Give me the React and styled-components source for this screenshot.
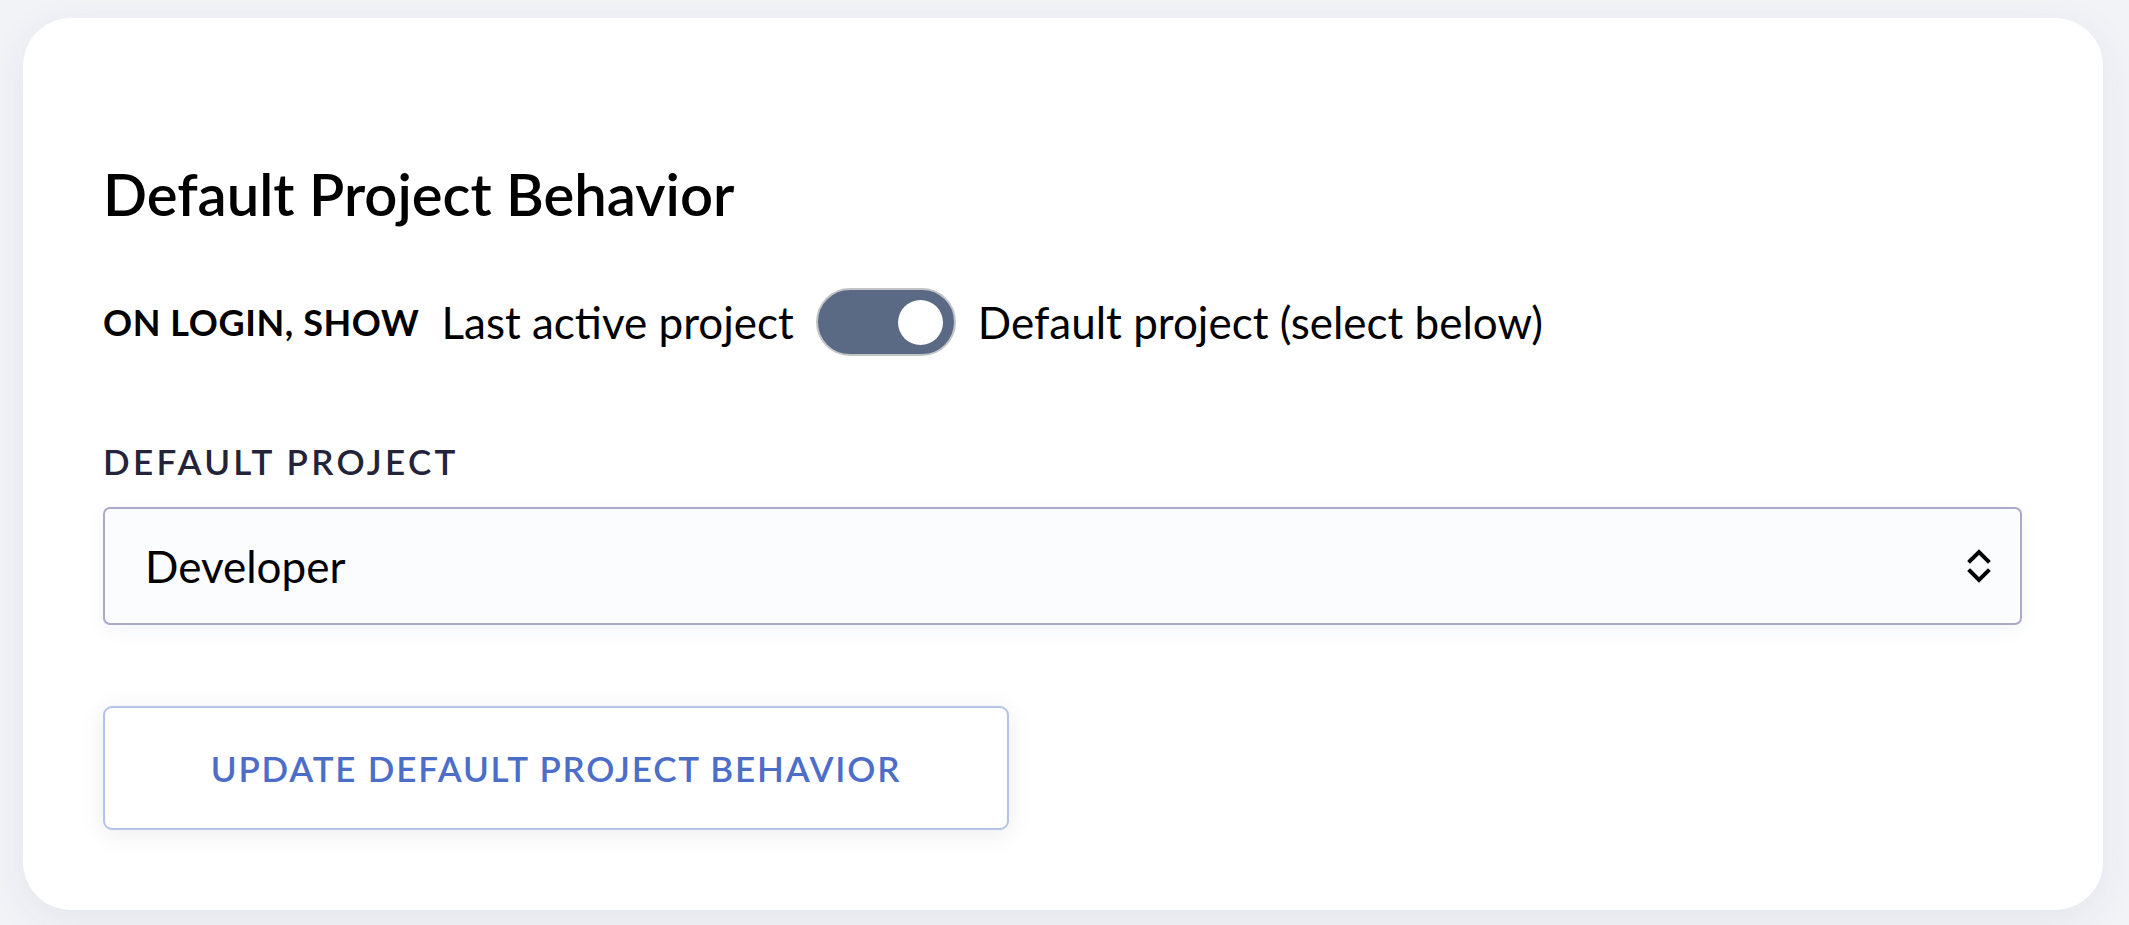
import styled, { createGlobalStyle } from "styled-components";

const GlobalStyle = createGlobalStyle`
    html, body {
        margin: 0;
        padding: 0;
        background: #f2f3f7;
    }
    body {
        font-family: Lato, "Liberation Sans", sans-serif;
        color: #000;
    }
`;

const Page = styled.div`
    box-sizing: border-box;
    width: 100%;
    min-height: 925px;
    padding: 18px 26px 14px 23px;
`;

const Card = styled.section`
    box-sizing: border-box;
    background: #ffffff;
    border-radius: 48px;
    padding: 147px 81px 80px 80px;
    box-shadow: 0 10px 40px rgba(40, 50, 110, 0.07);
    display: flex;
    flex-direction: column;
    align-items: flex-start;
`;

const Title = styled.h2`
    margin: 0;
    font-size: 58px;
    line-height: 1;
    font-weight: 600;
    letter-spacing: 0;
`;

const Row = styled.div`
    margin-top: 65px;
    height: 68px;
    display: flex;
    align-items: center;
    gap: 22px;
`;

const RowLabel = styled.span`
    font-size: 36px;
    font-weight: 700;
    letter-spacing: 0.6px;
    text-transform: uppercase;
`;

const Option = styled.span`
    font-size: 44px;
    font-weight: 400;
`;

const Toggle = styled.button`
    box-sizing: border-box;
    width: 140px;
    height: 68px;
    border-radius: 34px;
    border: 2px solid #c2c4c8;
    background: #5a6a84;
    padding: 0 11px;
    display: flex;
    align-items: center;
    justify-content: ${(p) => (p.$on ? "flex-end" : "flex-start")};
    cursor: pointer;
`;

const Knob = styled.span`
    width: 45px;
    height: 45px;
    border-radius: 50%;
    background: #ffffff;
`;

const FieldLabel = styled.label`
    margin-top: 88px;
    font-size: 35px;
    line-height: 1;
    font-weight: 600;
    letter-spacing: 3.3px;
    color: #23233a;
    text-transform: uppercase;
`;

const Select = styled.div`
    box-sizing: border-box;
    margin-top: 28px;
    width: 100%;
    height: 118px;
    border: 2px solid #aaa9c8;
    border-radius: 7px;
    background: #fbfcfe;
    box-shadow: 0 6px 18px rgba(40, 50, 110, 0.05);
    padding: 0 29px 0 40px;
    display: flex;
    align-items: center;
    justify-content: space-between;
    font-size: 44px;
`;

const Button = styled.button`
    box-sizing: border-box;
    margin-top: 81px;
    width: 906px;
    height: 124px;
    border: 2px solid #b4c3ea;
    border-radius: 9px;
    background: #ffffff;
    box-shadow: 0 4px 26px rgba(0, 0, 0, 0.08);
    font-family: Lato, "Liberation Sans", sans-serif;
    font-size: 35px;
    font-weight: 600;
    letter-spacing: 1.8px;
    color: #4d6ec8;
    text-transform: uppercase;
    cursor: pointer;
`;

const Chevrons = () => (
    <svg width="24" height="40" viewBox="0 0 24 40" fill="none" stroke="#000" strokeWidth="4" strokeLinecap="square">
        <path d="M3 15 L12 6 L21 15" />
        <path d="M3 25 L12 34 L21 25" />
    </svg>
);

const App = () => {
    return (
        <>
            <GlobalStyle />
            <Page>
                <Card>
                    <Title>Default Project Behavior</Title>
                    <Row>
                        <RowLabel>On login, show</RowLabel>
                        <Option>Last active project</Option>
                        <Toggle $on>
                            <Knob />
                        </Toggle>
                        <Option>Default project (select below)</Option>
                    </Row>
                    <FieldLabel>Default project</FieldLabel>
                    <Select>
                        <span>Developer</span>
                        <Chevrons />
                    </Select>
                    <Button>Update default project behavior</Button>
                </Card>
            </Page>
        </>
    );
};

export default App;
